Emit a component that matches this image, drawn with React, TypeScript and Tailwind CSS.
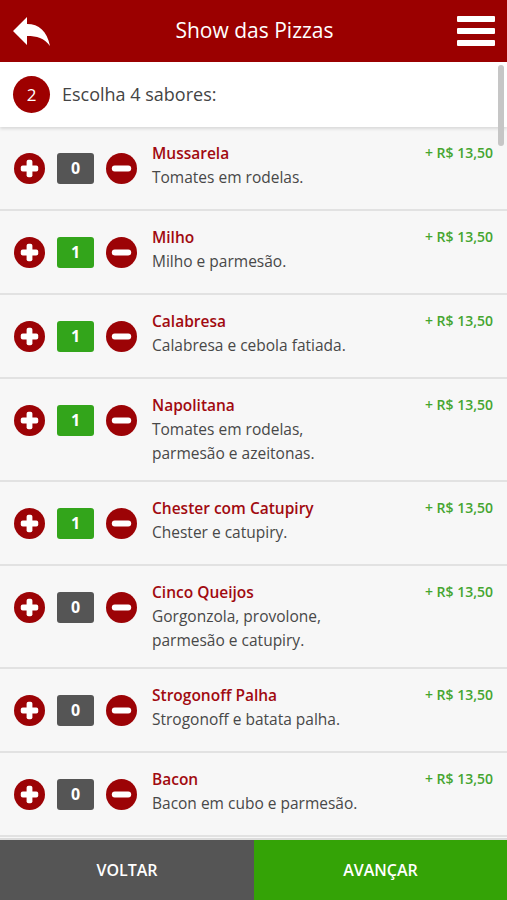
import React from "react";

const items = [
  { name: "Mussarela", desc: ["Tomates em rodelas."], qty: 0 },
  { name: "Milho", desc: ["Milho e parmesão."], qty: 1 },
  { name: "Calabresa", desc: ["Calabresa e cebola fatiada."], qty: 1 },
  { name: "Napolitana", desc: ["Tomates em rodelas,", "parmesão e azeitonas."], qty: 1 },
  { name: "Chester com Catupiry", desc: ["Chester e catupiry."], qty: 1 },
  { name: "Cinco Queijos", desc: ["Gorgonzola, provolone,", "parmesão e catupiry."], qty: 0 },
  { name: "Strogonoff Palha", desc: ["Strogonoff e batata palha."], qty: 0 },
  { name: "Bacon", desc: ["Bacon em cubo e parmesão."], qty: 0 },
];

const PlusIcon = () => (
  <svg width="31" height="31" viewBox="0 0 32 32">
    <circle cx="16" cy="16" r="16" fill="#9c0306" />
    <rect x="7" y="13" width="18" height="6" rx="2" fill="#fff" />
    <rect x="13" y="7" width="6" height="18" rx="2" fill="#fff" />
  </svg>
);

const MinusIcon = () => (
  <svg width="31" height="31" viewBox="0 0 32 32">
    <circle cx="16" cy="16" r="16" fill="#9c0306" />
    <rect x="6" y="13" width="20" height="6" rx="3" fill="#fff" />
  </svg>
);

const BackIcon = () => (
  <svg width="40" height="32" viewBox="0 0 40 32">
    <path d="M1 16 L15 2 L15 9 C27 9 35 16 38 31 C32 23 25 21 15 21 L15 30 Z" fill="#fff" />
  </svg>
);

const MenuIcon = () => (
  <svg width="38" height="32" viewBox="0 0 38 32">
    <rect x="0" y="1" width="38" height="6" rx="1" fill="#fff" />
    <rect x="0" y="13" width="38" height="6" rx="1" fill="#fff" />
    <rect x="0" y="25" width="38" height="6" rx="1" fill="#fff" />
  </svg>
);

export default function App() {
  return (
    <div className="w-[507px] h-[900px] flex flex-col bg-[#f7f7f7] overflow-hidden relative" style={{ fontFamily: "'Open Sans', 'Noto Sans', sans-serif" }}>
      {/* header */}
      <div className="h-[62px] bg-[#9b0000] flex items-center justify-between px-[12px] shrink-0">
        <BackIcon />
        <span className="text-white text-[21px]">Show das Pizzas</span>
        <MenuIcon />
      </div>

      {/* step */}
      <div className="h-[65px] bg-white flex items-center pl-[13px] gap-[12px] shadow-[0_2px_3px_rgba(0,0,0,0.12)] z-10 shrink-0">
        <div className="w-[37px] h-[37px] rounded-full bg-[#9e0000] text-white flex items-center justify-center text-[17px]">2</div>
        <span className="text-[#444] text-[18px]">Escolha 4 sabores:</span>
      </div>

      {/* list */}
      <div className="flex-1 overflow-hidden">
        {items.map((it) => (
          <div key={it.name} className="flex items-start border-b-2 border-[#e2e2e2] pl-[14px] pr-[14px]">
            <div className="flex items-center py-[26px] h-[82px] shrink-0">
              <PlusIcon />
              <div className={`ml-[12px] w-[37px] h-[31px] rounded-[3px] flex items-center justify-center text-white font-bold text-[16px] ${it.qty > 0 ? "bg-[#33a51b]" : "bg-[#555555]"}`}>
                {it.qty}
              </div>
              <div className="ml-[12px]">
                <MinusIcon />
              </div>
            </div>
            <div className="ml-[15px] flex-1 pt-[14px] pb-[15px]">
              <div className="text-[#a10a10] font-semibold text-[15.5px] leading-[24px]">{it.name}</div>
              {it.desc.map((d) => (
                <div key={d} className="text-[#484848] text-[15.5px] leading-[24px]">{d}</div>
              ))}
            </div>
            <div className="pt-[14px] text-[#45a530] font-semibold text-[14px] leading-[24px]">+ R$ 13,50</div>
          </div>
        ))}
      </div>

      {/* scrollbar */}
      <div className="absolute right-[3px] top-[65px] w-[6px] h-[81px] rounded-full bg-[#c6c6c6] z-20" />

      {/* footer */}
      <div className="h-[62px] flex shrink-0 border-t-2 border-[#dcdcdc]">
        <button className="w-[254px] bg-[#555555] text-white text-[16px] font-semibold">VOLTAR</button>
        <button className="flex-1 bg-[#34a306] text-white text-[16px] font-semibold">AVANÇAR</button>
      </div>
    </div>
  );
}
